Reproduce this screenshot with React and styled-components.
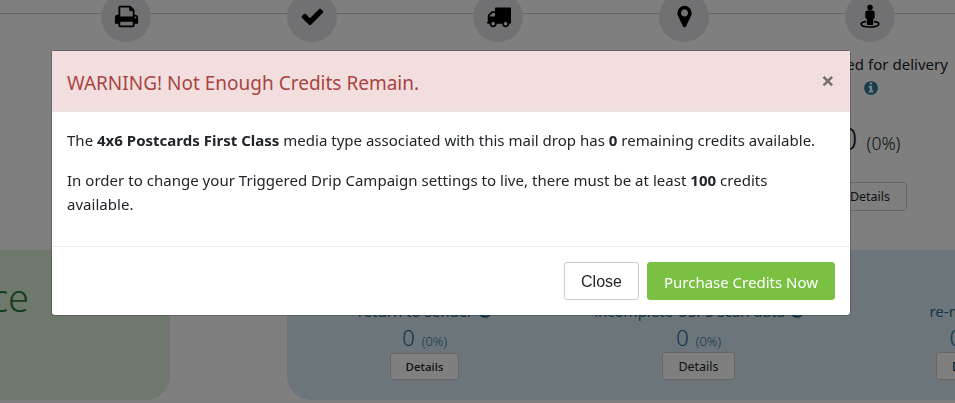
import React from 'react';
import styled, { createGlobalStyle } from 'styled-components';

const GlobalStyle = createGlobalStyle`
  * { box-sizing: border-box; }
  body {
    margin: 0;
    background: #fff;
    color: #212529;
    font-family: "Noto Sans", "Open Sans", sans-serif;
    font-size: 15px;
    overflow: hidden;
  }
  p { margin: 0; }
`;

const Page = styled.div`
  width: 955px;
  height: 403px;
  overflow: hidden;
`;

const Steps = styled.div`
  display: grid;
  grid-template-columns: repeat(5, 186px);
  height: 50px;
  margin-top: -8px;
  padding-left: 33px;
  justify-items: center;
  background: linear-gradient(#c8c8c8, #c8c8c8) 0 21px / 100% 1px no-repeat;
`;

const StepCircle = styled.div`
  width: 50px;
  height: 50px;
  border-radius: 50%;
  background: #e2e2e6;
  color: #000;
  display: flex;
  justify-content: center;
  padding-top: 12px;
`;

const Glyph = styled.svg`
  display: block;
  flex: none;
  width: ${(p) => p.$size}px;
  height: ${(p) => p.$size}px;
  fill: currentColor;
`;

const StepSummary = styled.section`
  width: 186px;
  height: 208px;
  margin-left: 777px;
  display: flex;
  flex-direction: column;
  align-items: center;
`;

const StepLabel = styled.div`
  margin-top: 10px;
  line-height: 24px;
  white-space: nowrap;
  letter-spacing: 0.03px;
`;

const InfoMark = styled.span`
  display: flex;
  color: #2d7ba0;
  margin: 4px 0 0 2px;
`;

const Count = styled.div`
  display: flex;
  align-items: baseline;
  gap: ${(p) => (p.$large ? 9 : 8)}px;
  margin-top: ${(p) => (p.$large ? 22 : 1)}px;
  font-weight: 300;
  font-size: ${(p) => (p.$large ? 31.5 : 22.5)}px;
  line-height: ${(p) => (p.$large ? 40 : 28)}px;
`;

const Percent = styled.span`
  font-size: ${(p) => (p.$large ? 17.5 : 13)}px;
  margin-left: ${(p) => (p.$large ? 0 : -1)}px;
`;

const DetailsButton = styled.button`
  width: ${(p) => p.$width}px;
  height: ${(p) => p.$height}px;
  margin-top: ${(p) => p.$top || 0}px;
  padding: 0;
  border: 1px solid #ccc;
  border-radius: 3px;
  background: #fff;
  color: #212529;
  font-family: inherit;
  font-size: ${(p) => p.$font}px;
  font-weight: ${(p) => p.$weight || 400};
`;

const Panels = styled.div`
  display: flex;
  gap: 117px;
  height: 150px;
`;

const GreenPanel = styled.section`
  flex: none;
  width: 170px;
  border-radius: 0 0 24px 0;
  background: #dff0d8;
  color: #2f7a38;
  overflow: hidden;
`;

const PanelTitle = styled.h2`
  margin: 20px 0 0;
  width: 29px;
  display: flex;
  justify-content: flex-end;
  font-weight: 300;
  font-size: 38px;
  line-height: 54px;
`;

const BluePanel = styled.section`
  flex: none;
  width: 840px;
  border-radius: 0 0 0 24px;
  background: #d9ebf5;
  color: #31708f;
  display: grid;
  grid-template-columns: 275px 273px 274px;
  padding-top: 49px;
`;

const ReturnColumn = styled.div`
  display: flex;
  flex-direction: column;
  align-items: center;
  color: #1f6f99;
`;

const ReturnLabel = styled.div`
  display: flex;
  align-items: center;
  gap: 4px;
  margin-left: 2px;
  line-height: 24px;
  white-space: nowrap;
`;

const Backdrop = styled.div`
  position: fixed;
  inset: 0;
  background: rgba(0, 0, 0, 0.5);
  display: flex;
  justify-content: center;
  align-items: flex-start;
  padding: 50px 53px 0 0;
`;

const Dialog = styled.div`
  width: 800px;
  height: 266px;
  border: 1px solid rgba(0, 0, 0, 0.2);
  border-radius: 4px;
  background: #fff;
  background-clip: padding-box;
  display: flex;
  flex-direction: column;
`;

const DialogHeader = styled.header`
  height: 61px;
  padding: 0 15px;
  display: flex;
  justify-content: space-between;
  align-items: center;
  background: #f2dede;
  border-bottom: 1px solid #ece5e5;
  color: #a94442;
`;

const DialogTitle = styled.h4`
  margin: 4px 0 0;
  font-weight: 400;
  font-size: 19px;
  line-height: 28px;
`;

const CloseMark = styled.button`
  border: 0;
  padding: 0;
  background: none;
  color: #796f6f;
  display: flex;
`;

const DialogBody = styled.div`
  flex: 1;
  padding: 16px 15px 0;
  display: flex;
  flex-direction: column;
  gap: 16px;
  line-height: 24px;
`;

const Message = styled.p`
  white-space: nowrap;
  letter-spacing: ${(p) => p.$spacing || 0}px;
`;

const DialogFooter = styled.footer`
  height: 69px;
  padding: 15px;
  border-top: 1px solid #e9ecef;
  display: flex;
  justify-content: flex-end;
  gap: 8px;
`;

const FooterButton = styled.button`
  width: ${(p) => (p.$primary ? 188 : 75)}px;
  height: 38px;
  padding: ${(p) => (p.$primary ? '2px 0 0' : '1px 0 0')};
  border: 1px solid ${(p) => (p.$primary ? '#7ac143' : '#ccc')};
  border-radius: 3px;
  background: ${(p) => (p.$primary ? '#7ac143' : '#fff')};
  color: ${(p) => (p.$primary ? '#fff' : '#212529')};
  font-family: ${(p) => (p.$primary ? 'inherit' : '"Liberation Sans", sans-serif')};
  font-size: ${(p) => (p.$primary ? 15 : 16)}px;
  white-space: nowrap;
`;

const paths = {
  print: 'M448 1536h896v-256h-896v256zm0-640h896v-384h-160q-40 0-68-28t-28-68v-160h-640v640zm1152 64q0-26-19-45t-45-19-45 19-19 45 19 45 45 19 45-19 19-45zm128 0v416q0 13-9.5 22.5t-22.5 9.5h-224v160q0 40-28 68t-68 28h-960q-40 0-68-28t-28-68v-160h-224q-13 0-22.5-9.5t-9.5-22.5v-416q0-79 56.5-135.5t135.5-56.5h64v-544q0-40 28-68t68-28h672q40 0 88 20t76 48l152 152q28 28 48 76t20 88v256h64q79 0 135.5 56.5t56.5 135.5z',
  check: 'M1671 566q0 40-28 68l-724 724-136 136q-28 28-68 28t-68-28l-136-136-362-362q-28-28-28-68t28-68l136-136q28-28 68-28t68 28l294 295 656-657q28-28 68-28t68 28l136 136q28 28 28 68z',
  truck: 'M640 1408q0-52-38-90t-90-38-90 38-38 90 38 90 90 38 90-38 38-90zm-384-512h384v-256h-158q-13 0-22 9l-195 195q-9 9-9 22v30zm1280 512q0-52-38-90t-90-38-90 38-38 90 38 90 90 38 90-38 38-90zm256-1088v1024q0 15-4 26.5t-13.5 18.5-16.5 11.5-23.5 6-22.5 2-25.5 0-22.5-.5q0 106-75 181t-181 75-181-75-75-181h-384q0 106-75 181t-181 75-181-75-75-181h-64q-3 0-22.5.5t-25.5 0-22.5-2-23.5-6-16.5-11.5-13.5-18.5-4-26.5q0-26 19-45t45-19v-320q0-8-.5-35t0-38 2.5-34.5 6.5-37 14-30.5 22.5-30l198-198q19-19 50.5-32t58.5-13h160v-192q0-26 19-45t45-19h1024q26 0 45 19t19 45z',
  marker: 'M1152 640q0-106-75-181t-181-75-181 75-75 181 75 181 181 75 181-75 75-181zm256 0q0 109-33 179l-364 774q-16 33-47.5 52t-67.5 19-67.5-19-46.5-52l-365-774q-33-70-33-179 0-212 150-362t362-150 362 150 150 362z',
  info: 'M1152 1376v-160q0-14-9-23t-23-9h-96v-512q0-14-9-23t-23-9h-320q-14 0-23 9t-9 23v160q0 14 9 23t23 9h96v320h-96q-14 0-23 9t-9 23v160q0 14 9 23t23 9h448q14 0 23-9t9-23zm-128-896v-160q0-14-9-23t-23-9h-192q-14 0-23 9t-9 23v160q0 14 9 23t23 9h192q14 0 23-9t9-23zm640 416q0 209-103 385.5t-279.5 279.5-385.5 103-385.5-103-279.5-279.5-103-385.5 103-385.5 279.5-279.5 385.5-103 385.5 103 279.5 279.5 103 385.5z',
};

function Icon({ name, size }) {
  return (
    <Glyph viewBox="0 0 1792 1792" $size={size} aria-hidden="true">
      <path d={paths[name]} />
    </Glyph>
  );
}

function StreetView() {
  return (
    <Glyph viewBox="0 0 25 25" $size={25} aria-hidden="true">
      <circle cx="12" cy="3.6" r="2.8" />
      <path d="M9.500 6.400h5q2.200 0 2.200 2v5.200q0 1-1.500 1.300v5.100q0 1-1 1h-4.400q-1 0-1-1v-5.100q-1.500-.3-1.500-1.300v-5.200q0-2 2.200-2z" />
      <path
        d="M7.400 17.600C4.500 18 3.200 18.900 3.200 20c0 1.800 3.900 3 8.800 3s8.800-1.200 8.800-3c0-1.100-1.300-2-4.200-2.400"
        fill="none"
        stroke="currentColor"
        strokeWidth="1.700"
        strokeLinecap="round"
      />
    </Glyph>
  );
}

const returns = [
  { label: 'return to sender', width: 69, height: 27, top: -2, font: 11.5, weight: 500 },
  { label: 'incomplete USPS scan data', width: 73, height: 28, top: -3, font: 12.5 },
  { label: 're-mailed', width: 73, height: 28, top: -3, font: 12.5 },
];

export default function App() {
  return (
    <>
      <GlobalStyle />
      <Page>
        <Steps>
          {['print', 'check', 'truck', 'marker'].map((name) => (
            <StepCircle key={name}>
              <Icon name={name} size={25} />
            </StepCircle>
          ))}
          <StepCircle>
            <StreetView />
          </StepCircle>
        </Steps>
        <StepSummary>
          <StepLabel>Processed for delivery</StepLabel>
          <InfoMark>
            <Icon name="info" size={16} />
          </InfoMark>
          <Count $large>
            0 <Percent $large>(0%)</Percent>
          </Count>
          <DetailsButton $width={74} $height={29} $top={19} $font={12.5}>
            Details
          </DetailsButton>
        </StepSummary>
        <Panels>
          <GreenPanel>
            <PanelTitle>Compliance</PanelTitle>
          </GreenPanel>
          <BluePanel>
            {returns.map((r) => (
              <ReturnColumn key={r.label}>
                <ReturnLabel>
                  {r.label}
                  <Icon name="info" size={16} />
                </ReturnLabel>
                <Count>
                  0 <Percent>(0%)</Percent>
                </Count>
                <DetailsButton $width={r.width} $height={r.height} $top={r.top} $font={r.font} $weight={r.weight}>
                  Details
                </DetailsButton>
              </ReturnColumn>
            ))}
          </BluePanel>
        </Panels>
      </Page>
      <Backdrop>
        <Dialog role="dialog">
          <DialogHeader>
            <DialogTitle>WARNING! Not Enough Credits Remain.</DialogTitle>
            <CloseMark aria-label="Close">
              <Glyph viewBox="0 0 14 14" $size={14}>
                <path d="M2.500 2.800l8.600 8.600M11.100 2.800l-8.600 8.600" stroke="currentColor" strokeWidth="2.600" />
              </Glyph>
            </CloseMark>
          </DialogHeader>
          <DialogBody>
            <Message $spacing={0.012}>
              The <b>4x6 Postcards First Class</b> media type associated with this mail drop has <b>0</b> remaining
              credits available.
            </Message>
            <Message $spacing={0.025}>
              In order to change your Triggered Drip Campaign settings to live, there must be at least <b>100</b>{' '}
              credits
              <br />
              available.
            </Message>
          </DialogBody>
          <DialogFooter>
            <FooterButton>Close</FooterButton>
            <FooterButton $primary>Purchase Credits Now</FooterButton>
          </DialogFooter>
        </Dialog>
      </Backdrop>
    </>
  );
}
